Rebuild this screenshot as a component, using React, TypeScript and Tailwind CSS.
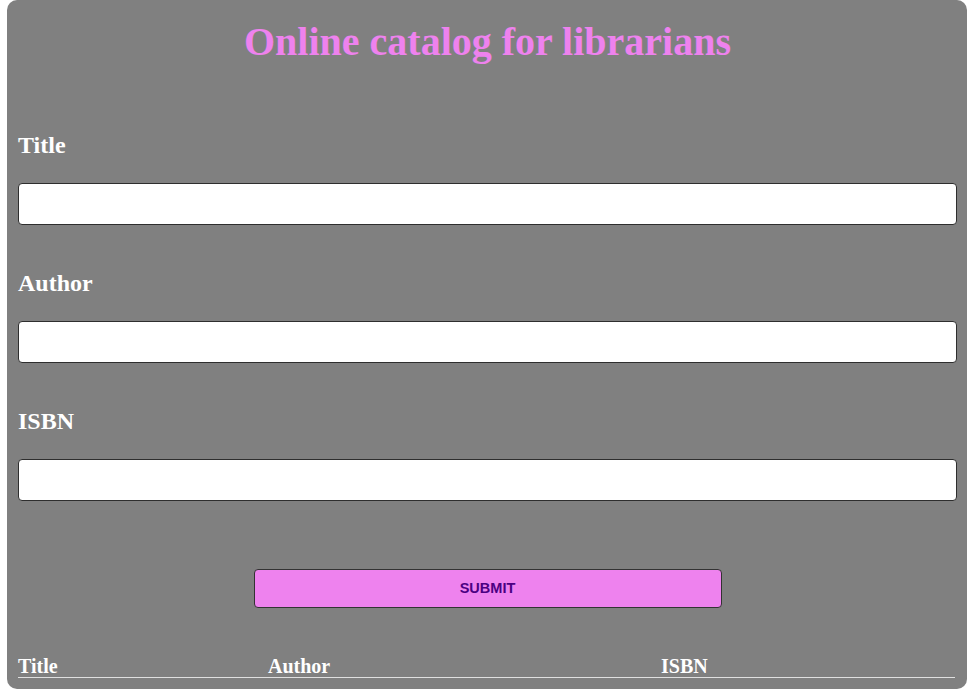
export default function App() {
  const fields = ['Title', 'Author', 'ISBN'];

  return (
    <div className="min-h-[691px] bg-white">
      <div className="ml-[7px] w-[960px] h-[689px] rounded-[10px] bg-[#808080] pl-[11px] pr-[10px] pt-[19px] font-['Liberation_Serif','Times_New_Roman',serif]">
        <h1 className="h-[46px] text-center text-[40px] leading-[46px] font-bold text-[#ee82ee]">
          Online catalog for librarians
        </h1>

        <form className="flex flex-col" onSubmit={(e) => e.preventDefault()}>
          {fields.map((f, i) => (
            <div key={f} className={i === 0 ? 'mt-[65px]' : 'mt-[43px]'}>
              <label className="block h-[29px] text-[24px] leading-[30px] font-bold text-white">{f}</label>
              <input
                type="text"
                className="mt-[24px] block h-[42px] w-full rounded-[4px] border border-[#2e2e2e] bg-white px-2 outline-none"
              />
            </div>
          ))}

          <div className="mt-[68px] flex justify-center">
            <button
              type="submit"
              className="h-[39px] w-[468px] rounded-[4px] border border-[#333333] bg-[#ee82ee] font-['Liberation_Sans',Arial,sans-serif] text-[14.5px] font-bold text-[#4b0082]"
            >
              SUBMIT
            </button>
          </div>
        </form>

        <div className="mt-[46px] mr-[2px] grid h-[24px] grid-cols-[250px_393px_1fr] border-b border-[#e0e0e0] text-[20px] leading-[24px] font-bold text-white">
          <div>Title</div>
          <div>Author</div>
          <div>ISBN</div>
        </div>
      </div>
    </div>
  );
}
